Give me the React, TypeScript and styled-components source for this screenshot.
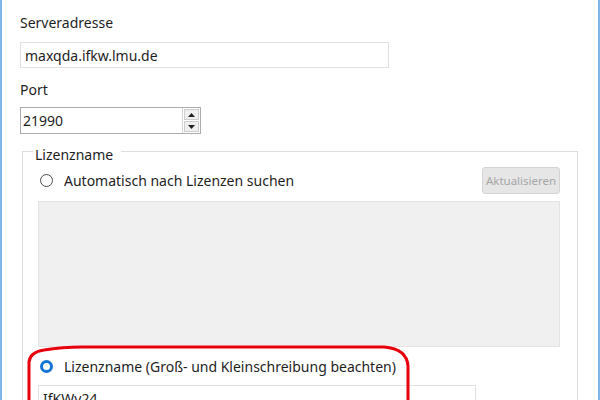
import styled, { createGlobalStyle } from "styled-components";

const GlobalStyle = createGlobalStyle`
  html, body {
    margin: 0;
    padding: 0;
    background: #ffffff;
  }
  * {
    box-sizing: border-box;
  }
`;

const Frame = styled.div`
  position: relative;
  width: 600px;
  height: 400px;
  overflow: hidden;
  padding: 13px 0 0 18px;
  border-left: 2px solid #7fb4ea;
  border-right: 2px solid #7fb4ea;
  background: #ffffff;
  font-family: "Noto Sans", "Open Sans", sans-serif;
  font-size: 14px;
  color: #1e1e1e;
`;

const Label = styled.div<{ $top?: number }>`
  line-height: 19px;
  height: 19px;
  margin-top: ${(props) => props.$top || 0}px;
`;

const TextBox = styled.div<{ $width: number; $top: number }>`
  display: flex;
  align-items: center;
  width: ${(props) => props.$width}px;
  height: 26px;
  margin-top: ${(props) => props.$top}px;
  padding: 0 4px;
  border: 1px solid #e1e1e1;
  background: #ffffff;
  line-height: 19px;
  white-space: nowrap;
`;

const Spin = styled.div`
  display: flex;
  width: 181px;
  height: 27px;
  margin-top: 8px;
  border: 1px solid #adadad;
  background: #ffffff;

  .value {
    flex: 1;
    display: flex;
    align-items: center;
    padding-left: 2px;
  }

  .buttons {
    display: flex;
    flex-direction: column;
    gap: 1px;
    width: 18px;
    padding: 1px;
    border-left: 1px solid #d6d6d6;
  }
`;

const SpinButton = styled.div`
  flex: 1;
  display: flex;
  align-items: center;
  justify-content: center;
  background: #f0f0f0;
  border: 1px solid #cfcfcf;
`;

const Group = styled.div`
  display: flex;
  flex-direction: column;
  width: 556px;
  height: 300px;
  margin: 17px 0 0 2px;
  padding: 0 17px 0 15px;
  border: 1px solid #dedede;
`;

const Legend = styled.div`
  align-self: flex-start;
  margin: -7px 0 0 -5px;
  padding: 0 8px 0 2px;
  background: #ffffff;
  line-height: 19px;
`;

const OptionRow = styled.div<{ $top: number }>`
  display: flex;
  align-items: center;
  justify-content: space-between;
  height: 27px;
  margin-top: ${(props) => props.$top}px;
`;

const Radio = styled.label`
  display: flex;
  align-items: center;
  gap: 11px;
  padding-left: 2px;
  line-height: 19px;
  white-space: nowrap;
`;

const RadioMark = styled.span<{ $checked?: boolean }>`
  width: 13px;
  height: 13px;
  border-radius: 50%;
  border: ${(props) =>
    props.$checked ? "3.5px solid #1574d4" : "1px solid #4a4a4a"};
  background: #ffffff;
`;

const DisabledButton = styled.div`
  display: flex;
  align-items: center;
  justify-content: center;
  width: 78px;
  height: 27px;
  border: 1px solid #d4d4d4;
  border-radius: 3px;
  background: #e6e6e6;
  color: #a5a5a5;
  font-size: 11.5px;
`;

const ListArea = styled.div`
  height: 146px;
  margin-top: 7px;
  border: 1px solid #e4e4e4;
  background: #f0f0f0;
`;

const Annotation = styled.svg`
  position: absolute;
  left: 0;
  top: 0;
  pointer-events: none;
`;

const Arrow = ({ up }: { up?: boolean }) => (
  <svg width="7" height="4" viewBox="0 0 7 4">
    <path d={up ? "M0 4 L3.5 0 L7 4 Z" : "M0 0 L3.5 4 L7 0 Z"} fill="#222" />
  </svg>
);

const App = () => {
  return (
    <>
      <GlobalStyle />
      <Frame>
        <Label>Serveradresse</Label>
        <TextBox $width={369} $top={10}>
          maxqda.ifkw.lmu.de
        </TextBox>
        <Label $top={12}>Port</Label>
        <Spin>
          <div className="value">21990</div>
          <div className="buttons">
            <SpinButton>
              <Arrow up />
            </SpinButton>
            <SpinButton>
              <Arrow />
            </SpinButton>
          </div>
        </Spin>

        <Group>
          <Legend>Lizenzname</Legend>
          <OptionRow $top={3}>
            <Radio>
              <RadioMark />
              Automatisch nach Lizenzen suchen
            </Radio>
            <DisabledButton>Aktualisieren</DisabledButton>
          </OptionRow>
          <ListArea />
          <OptionRow $top={6}>
            <Radio>
              <RadioMark $checked />
              Lizenzname (Groß- und Kleinschreibung beachten)
            </Radio>
          </OptionRow>
          <TextBox $width={438} $top={5}>
            IfKWy24
          </TextBox>
        </Group>

        <Annotation width="600" height="400" viewBox="0 0 600 400">
          <path
            d="M27 402 L27 362 Q28 352 42 350 Q60 347 80 347 L382 347 Q405 349 406 366 L406 402"
            fill="none"
            stroke="#e8000d"
            strokeWidth="3"
            strokeLinecap="round"
          />
        </Annotation>
      </Frame>
    </>
  );
};

export default App;
